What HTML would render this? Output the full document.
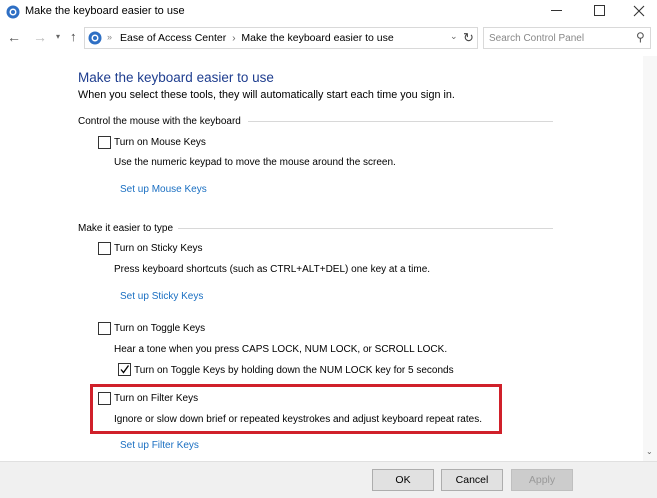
<!DOCTYPE html>
<html><head><meta charset="utf-8"><style>
*{margin:0;padding:0;box-sizing:border-box}
body{width:657px;height:498px;background:#fff;font-family:"Liberation Sans",sans-serif;font-size:10px;color:#000;position:relative;overflow:hidden}
.a{position:absolute;white-space:nowrap}
.t{margin-top:1px}
.cb{position:absolute;width:13px;height:13px;border:1px solid #333;background:#fff}
.link{color:#1a6fc2}
.line{position:absolute;height:1px;background:#d8d8d8}
.btn{position:absolute;top:469px;height:22px;width:62px;border:1px solid #adadad;background:#e1e1e1;text-align:center;line-height:20px;font-size:10.5px}
</style></head><body>
<svg class="a" style="left:6px;top:5px" width="14" height="14"><circle cx="7" cy="7" r="6.5" fill="#2e6fc4"/><circle cx="7" cy="7" r="3.5" fill="#fff"/><circle cx="7" cy="7" r="2" fill="#2e6fc4"/></svg>
<div class="a" style="left:25px;top:5px;font-size:11px">Make the keyboard easier to use</div>
<div class="a" style="left:551px;top:10px;width:11px;height:1px;background:#333"></div>
<div class="a" style="left:594px;top:5px;width:11px;height:11px;border:1px solid #333"></div>
<svg class="a" style="left:633px;top:5px" width="12" height="12"><path d="M1 1L11 11M11 1L1 11" stroke="#333" stroke-width="1.1"/></svg>
<div class="a" style="left:7px;top:29px;font-size:14px;color:#555">←</div>
<div class="a" style="left:33px;top:29px;font-size:14px;color:#bbb">→</div>
<div class="a" style="left:56px;top:32px;font-size:8px;color:#666">▾</div>
<div class="a" style="left:70px;top:29px;font-size:13px;color:#444">↑</div>
<div class="a" style="left:84px;top:27px;width:394px;height:22px;border:1px solid #d9d9d9"></div>
<svg class="a" style="left:88px;top:31px" width="14" height="14"><circle cx="7" cy="7" r="6.5" fill="#2e6fc4"/><circle cx="7" cy="7" r="3.5" fill="#fff"/><circle cx="7" cy="7" r="2" fill="#2e6fc4"/></svg>
<div class="a" style="left:107px;top:32px;color:#888;font-size:9px">»</div>
<div class="a" style="left:120px;top:32px;font-size:10.5px">Ease of Access Center &nbsp;<span style="color:#666">›</span>&nbsp; Make the keyboard easier to use</div>
<div class="a" style="left:450px;top:31px;color:#666;font-size:9px">⌄</div>
<div class="a" style="left:463px;top:30px;color:#444;font-size:13px">↻</div>
<div class="a" style="left:483px;top:27px;width:168px;height:22px;border:1px solid #d9d9d9"></div>
<div class="a" style="left:489px;top:33px;color:#888">Search Control Panel</div>
<div class="a" style="left:636px;top:30px;color:#555;font-size:12px">⚲</div>
<div class="a" style="left:643px;top:56px;width:14px;height:405px;background:#f7f7f7"></div>
<div class="a" style="left:78px;top:70px;font-size:13.5px;color:#1e3d8f">Make the keyboard easier to use</div>
<div class="a" style="left:78px;top:89px;font-size:10.8px">When you select these tools, they will automatically start each time you sign in.</div>
<div class="a t" style="left:78px;top:115px">Control the mouse with the keyboard</div>
<div class="line" style="left:248px;top:121px;width:305px"></div>
<div class="cb" style="left:98px;top:136px"></div>
<div class="a t" style="left:114px;top:136px">Turn on Mouse Keys</div>
<div class="a t" style="left:114px;top:156px">Use the numeric keypad to move the mouse around the screen.</div>
<div class="a t link" style="left:120px;top:183px">Set up Mouse Keys</div>
<div class="a t" style="left:78px;top:222px">Make it easier to type</div>
<div class="line" style="left:178px;top:228px;width:375px"></div>
<div class="cb" style="left:98px;top:242px"></div>
<div class="a t" style="left:114px;top:242px">Turn on Sticky Keys</div>
<div class="a t" style="left:114px;top:263px">Press keyboard shortcuts (such as CTRL+ALT+DEL) one key at a time.</div>
<div class="a t link" style="left:120px;top:290px">Set up Sticky Keys</div>
<div class="cb" style="left:98px;top:322px"></div>
<div class="a t" style="left:114px;top:322px">Turn on Toggle Keys</div>
<div class="a t" style="left:114px;top:343px">Hear a tone when you press CAPS LOCK, NUM LOCK, or SCROLL LOCK.</div>
<div class="cb" style="left:118px;top:363px"></div>
<svg class="a" style="left:119px;top:364px" width="11" height="11"><path d="M2 5.5L4.5 8.5L9.5 1.5" stroke="#000" stroke-width="1.3" fill="none"/></svg>
<div class="a t" style="left:134px;top:364px">Turn on Toggle Keys by holding down the NUM LOCK key for 5 seconds</div>
<div class="a" style="left:90px;top:384px;width:412px;height:50px;border:3px solid #d0202a"></div>
<div class="cb" style="left:98px;top:392px"></div>
<div class="a t" style="left:114px;top:392px">Turn on Filter Keys</div>
<div class="a t" style="left:114px;top:413px">Ignore or slow down brief or repeated keystrokes and adjust keyboard repeat rates.</div>
<div class="a t link" style="left:120px;top:439px">Set up Filter Keys</div>
<div class="a" style="left:646px;top:447px;font-size:8px;color:#666">⌄</div>
<div class="a" style="left:0;top:461px;width:657px;height:37px;background:#f0f0f0;border-top:1px solid #e0e0e0"></div>
<div class="btn" style="left:372px">OK</div>
<div class="btn" style="left:441px">Cancel</div>
<div class="btn" style="left:511px;color:#999;background:#ccc;border-color:#bfbfbf">Apply</div>
</body></html>
